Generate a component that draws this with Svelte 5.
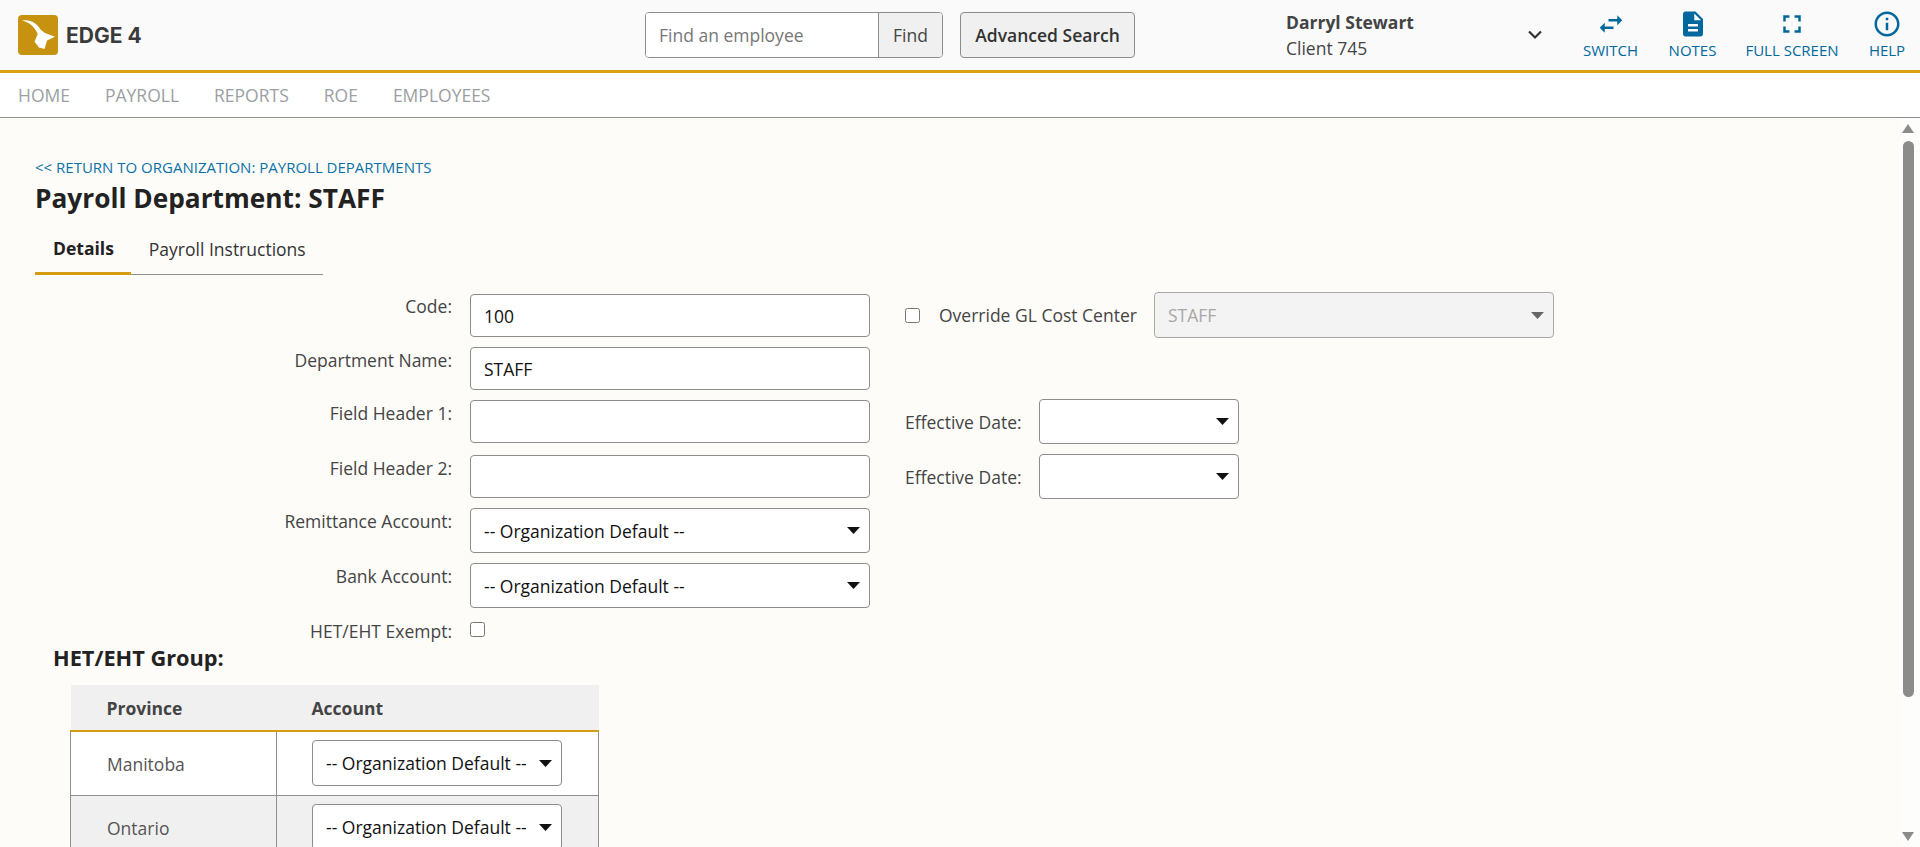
<script lang="ts">
  const navItems = ["Home", "Payroll", "Reports", "ROE", "Employees"];
  const actions = [
    { label: "Switch", d: "M6.99 11L3 15l3.99 4v-3H14v-2H6.99v-3zM21 9l-4-4v3h-7v2h7v3l4-4z" },
    { label: "Notes", d: "M14 2H6c-1.1 0-1.99.9-1.99 2L4 20c0 1.1.89 2 1.99 2H18c1.1 0 2-.9 2-2V8l-6-6zm2 16H8v-2h8v2zm0-4H8v-2h8v2zm-3-5V3.5L18.5 9H13z" },
    { label: "Full Screen", d: "M7 14H5v5h5v-2H7v-3zm-2-4h2V7h3V5H5v5zm12 7h-3v2h5v-5h-2v3zM14 5v2h3v3h2V5h-5z" },
    { label: "Help", d: "M11 7h2v2h-2zm0 4h2v6h-2zm1-9C6.48 2 2 6.48 2 12s4.48 10 10 10 10-4.48 10-10S17.52 2 12 2zm0 18c-4.41 0-8-3.59-8-8s3.59-8 8-8 8 3.59 8 8-3.59 8-8 8z" },
  ];
  const provinces = ["Manitoba", "Ontario"];
  const orgDefault = "-- Organization Default --";
</script>

<div class="app">
  <header class="topbar">
    <div class="brand">
      <svg class="logo" viewBox="0 0 40 40" width="40" height="40">
        <rect width="40" height="40" rx="4" fill="#c6920f" />
        <path d="M4 5.500C12 4 19 8 23 15l4 3 10 3.700-8 3.800-2.500 8.500-5.500-1.500-4.500-5.800 3.200-7.700C17 12 11 7 4 5.500z" fill="#fff" />
      </svg>
      <span class="brand-name">EDGE 4</span>
    </div>
    <div class="search">
      <input type="text" placeholder="Find an employee" />
      <button class="find">Find</button>
    </div>
    <button class="advanced">Advanced Search</button>
    <div class="user">
      <div class="user-text">
        <strong>Darryl Stewart</strong>
        <span>Client 745</span>
      </div>
      <svg class="chevron" viewBox="0 0 16 10" width="16" height="10">
        <path d="M2 1.500l6 6 6-6" fill="none" stroke="#333" stroke-width="2.200" />
      </svg>
    </div>
    <nav class="actions">
      {#each actions as a}
        <a class="action" href="#top">
          <svg viewBox="0 0 24 24" width="30" height="30"><path d={a.d} fill="#00689d" /></svg>
          <span>{a.label}</span>
        </a>
      {/each}
    </nav>
  </header>

  <nav class="mainnav">
    {#each navItems as item}
      <a href="#top">{item}</a>
    {/each}
  </nav>

  <div class="body">
    <main class="content">
      <a class="back" href="#top">&lt;&lt; Return to Organization: Payroll Departments</a>
      <h1>Payroll Department: STAFF</h1>

      <div class="tabs">
        <button class="tab active">Details</button>
        <button class="tab">Payroll Instructions</button>
      </div>

      <div class="form">
        <label class="lbl l-code" for="code">Code:</label>
        <input id="code" class="ctl" type="text" value="100" />
        <div class="override">
          <input type="checkbox" />
          <span>Override GL Cost Center</span>
          <select class="ctl gl" disabled><option>STAFF</option></select>
        </div>

        <label class="lbl" for="dept">Department Name:</label>
        <input id="dept" class="ctl" type="text" value="STAFF" />
        <div></div>

        <label class="lbl" for="fh1">Field Header 1:</label>
        <input id="fh1" class="ctl" type="text" />
        <div class="effective">
          <span>Effective Date:</span>
          <select class="ctl date"><option></option></select>
        </div>

        <label class="lbl" for="fh2">Field Header 2:</label>
        <input id="fh2" class="ctl" type="text" />
        <div class="effective">
          <span>Effective Date:</span>
          <select class="ctl date"><option></option></select>
        </div>

        <label class="lbl" for="remit">Remittance Account:</label>
        <select id="remit" class="ctl"><option>{orgDefault}</option></select>
        <div></div>

        <label class="lbl" for="bank">Bank Account:</label>
        <select id="bank" class="ctl"><option>{orgDefault}</option></select>
        <div></div>

        <label class="lbl l-het" for="het">HET/EHT Exempt:</label>
        <div><input id="het" type="checkbox" /></div>
        <div></div>
      </div>

      <h2>HET/EHT Group:</h2>
      <table>
        <thead>
          <tr><th class="c1">Province</th><th class="c2">Account</th></tr>
        </thead>
        <tbody>
          {#each provinces as p}
            <tr>
              <td class="c1">{p}</td>
              <td class="c2"><select class="ctl row-select"><option>{orgDefault}</option></select></td>
            </tr>
          {/each}
        </tbody>
      </table>
    </main>

    <div class="scrollbar">
      <span class="arrow up"></span>
      <span class="thumb"></span>
      <span class="arrow down"></span>
    </div>
  </div>
</div>

<style>
  :global(body) {
    margin: 0;
    font-family: "Open Sans", "Noto Sans", sans-serif;
    font-size: 17.5px;
    color: #333;
    overflow: hidden;
  }
  .app {
    display: flex;
    flex-direction: column;
    height: 847px;
    overflow: hidden;
    background: #fdfcf9;
  }
  a {
    text-decoration: none;
  }
  button,
  input,
  select {
    font-family: inherit;
    font-size: 17.5px;
  }

  .topbar {
    display: flex;
    align-items: center;
    flex: none;
    height: 70px;
    background: #fafafa;
    border-bottom: 3px solid #d8a110;
  }
  .brand {
    display: flex;
    align-items: center;
    gap: 8px;
    width: 627px;
    padding-left: 18px;
  }
  .brand-name {
    font-family: Inter, "Liberation Sans", sans-serif;
    font-weight: 700;
    font-size: 21px;
    color: #3a3a3a;
  }
  .search {
    display: flex;
    width: 298px;
    height: 46px;
    box-sizing: border-box;
    border: 1px solid #8c8c8c;
    border-radius: 4px;
    overflow: hidden;
    background: #fff;
  }
  .search input {
    flex: 1;
    min-width: 0;
    border: 0;
    outline: none;
    padding: 0 13px;
    color: #333;
  }
  .search input::placeholder {
    color: #777;
  }
  .find {
    width: 64px;
    border: 0;
    border-left: 1px solid #8c8c8c;
    background: #f0f0f0;
    color: #444;
    padding: 0;
  }
  .advanced {
    width: 175px;
    height: 46px;
    margin-left: 17px;
    border: 1px solid #8c8c8c;
    border-radius: 4px;
    background: #f0f0f0;
    color: #333;
    font-weight: 600;
    padding: 0;
  }
  .user {
    display: flex;
    align-items: center;
    justify-content: space-between;
    width: 257px;
    margin-left: 151px;
  }
  .user-text {
    display: flex;
    flex-direction: column;
    gap: 3px;
    line-height: 23px;
    color: #444;
  }
  .user-text strong {
    font-weight: 700;
  }
  .actions {
    display: flex;
  }
  .action {
    display: flex;
    flex-direction: column;
    align-items: center;
    font-size: 15px;
    line-height: 18px;
    text-transform: uppercase;
    color: #00689d;
    margin-top: -3px;
  }
  .action span {
    margin-top: 2px;
  }
  .action:nth-child(1) {
    width: 65px;
    margin-left: 35px;
  }
  .action:nth-child(2) {
    width: 65px;
    margin-left: 17px;
  }
  .action:nth-child(3) {
    width: 100px;
    margin-left: 17px;
  }
  .action:nth-child(4) {
    width: 50px;
    margin-left: 20px;
  }

  .mainnav {
    display: flex;
    flex: none;
    gap: 35px;
    align-items: center;
    height: 44px;
    padding-left: 18px;
    background: #fff;
    border-bottom: 1px solid #8f8f8f;
  }
  .mainnav a {
    color: #9b9fa3;
    text-transform: uppercase;
  }

  .body {
    flex: 1;
    display: flex;
    min-height: 0;
  }
  .content {
    flex: 1;
    min-width: 0;
    padding: 39px 0 0 35px;
    overflow: hidden;
  }
  .back {
    display: block;
    font-size: 15px;
    line-height: 20px;
    text-transform: uppercase;
    color: #0b72a8;
  }
  h1 {
    margin: 5px 0 0;
    font-size: 26.250px;
    line-height: 32px;
    font-weight: 700;
    color: #222;
  }
  .tabs {
    display: flex;
    width: 288px;
    height: 46px;
    margin-top: 14px;
    border-bottom: 1px solid #8f8f8f;
  }
  .tab {
    border: 0;
    background: none;
    padding: 0 17px 5px 18px;
    color: #333;
    margin-bottom: -1px;
  }
  .tab.active {
    font-weight: 700;
    color: #222;
    border-bottom: 3px solid #d39c12;
  }

  .form {
    display: grid;
    grid-template-columns: 417px 400px 1fr;
    grid-template-rows: 53px 53px 55px 53px 55px 59px auto;
    column-gap: 18px;
    margin-top: 19px;
  }
  .lbl {
    text-align: right;
    line-height: 24px;
    color: #444;
    padding-top: 1px;
  }
  .l-code {
    padding-top: 0;
  }
  .l-het {
    margin-top: -4px;
  }
  .ctl {
    box-sizing: border-box;
    width: 100%;
    height: 43px;
    border: 1px solid #8c8c8c;
    border-radius: 4px;
    background: #fff;
    color: #111;
    padding: 0 13px;
    outline: none;
  }
  select.ctl {
    appearance: none;
    -webkit-appearance: none;
    height: 45px;
    background-image: url("data:image/svg+xml,%3Csvg xmlns='http://www.w3.org/2000/svg' width='13' height='7'%3E%3Cpath d='M0 0h13L6.500 7z' fill='%23111'/%3E%3C/svg%3E");
    background-repeat: no-repeat;
    background-position: right 9px center;
  }
  input[type="checkbox"] {
    width: 15px;
    height: 15px;
    margin: 0;
    appearance: none;
    -webkit-appearance: none;
    box-sizing: border-box;
    border: 1px solid #767676;
    border-radius: 2.500px;
    background: #fff;
    display: block;
  }
  .override,
  .effective {
    display: flex;
    align-items: center;
    margin-left: 17px;
    color: #444;
  }
  .override {
    height: 46px;
    margin-top: -2px;
  }
  .override span {
    margin-left: 19px;
    width: 215px;
    flex: none;
  }
  .gl {
    width: 400px;
    height: 46px !important;
    background-color: #f3f3f3;
    color: #a8a8a8;
    opacity: 1;
    border-color: #a8a8a8;
    background-image: url("data:image/svg+xml,%3Csvg xmlns='http://www.w3.org/2000/svg' width='13' height='7'%3E%3Cpath d='M0 0h13L6.500 7z' fill='%23666'/%3E%3C/svg%3E") !important;
  }
  .effective {
    height: 45px;
    margin-top: -1px;
  }
  .effective span {
    width: 134px;
    flex: none;
  }
  .date {
    width: 200px;
  }

  h2 {
    margin: 2px 0 0 18px;
    font-size: 21.750px;
    line-height: 26px;
    font-weight: 700;
    color: #222;
  }
  table {
    width: 529px;
    margin: 14px 0 0 35px;
    border-collapse: collapse;
    table-layout: fixed;
    font-size: 17.5px;
  }
  th {
    height: 45px;
    padding: 0;
    text-align: left;
    font-weight: 700;
    color: #444;
    background: #f0f0f0;
    border-bottom: 2px solid #d39c12;
  }
  th.c2,
  td.c2 {
    padding-left: 35px;
  }
  th.c1,
  td.c1 {
    padding-left: 36px;
    width: 206px;
    box-sizing: border-box;
  }
  td {
    height: 63px;
    padding: 0;
    color: #555;
    background: #fff;
    border: 1px solid #8f8f8f;
  }
  tbody tr:nth-child(even) td {
    background: #f0f0f0;
  }
  .row-select {
    display: block;
    width: 250px;
    height: 46px !important;
    margin-top: -1px;
  }

  .scrollbar {
    flex: none;
    width: 16px;
    display: flex;
    flex-direction: column;
    align-items: center;
    padding-right: 4px;
    box-sizing: content-box;
    margin-left: -4px;
    background: #fdfdfb;
  }
  .arrow {
    width: 0;
    height: 0;
    border-left: 6px solid transparent;
    border-right: 6px solid transparent;
  }
  .arrow.up {
    margin-top: 6px;
    border-bottom: 9px solid #8c8c8c;
  }
  .arrow.down {
    margin-top: 135px;
    border-top: 9px solid #8c8c8c;
  }
  .thumb {
    width: 11px;
    height: 556px;
    margin-top: 8px;
    border-radius: 6px;
    background: #8c8c8c;
  }
</style>
